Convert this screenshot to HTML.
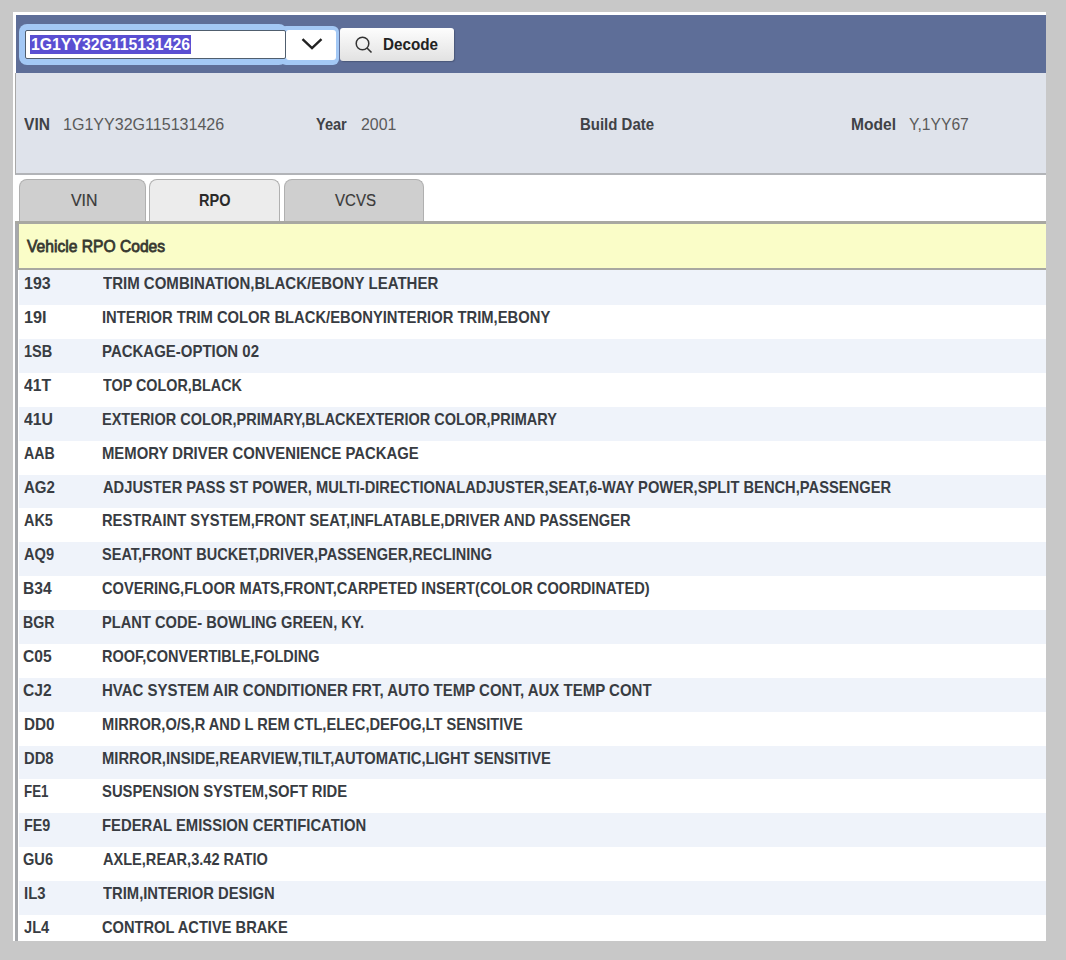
<!DOCTYPE html>
<html><head><meta charset="utf-8">
<style>
html,body{margin:0;padding:0;}
body{width:1066px;height:960px;background:#c8c8c8;position:relative;overflow:hidden;font-family:"Liberation Sans",sans-serif;color:#222;}
.a{position:absolute;}
.t{position:absolute;white-space:nowrap;line-height:20px;transform-origin:0 0;}
#frame{left:13px;top:12px;width:1033px;height:929px;background:#fff;}
#hdr{left:16px;top:15px;width:1030px;height:58px;background:#5e6e98;}
#ring{left:19px;top:24px;width:268px;height:41px;background:#a3c8f5;border-radius:8px;}
#ring2{left:280px;top:25.5px;width:58.5px;height:39px;background:#a3c8f5;border-radius:6px;}
#inp{left:25px;top:30px;width:259px;height:27px;background:#fff;border:1px solid #505e6e;border-radius:2px;}
#selbox{left:30px;top:35px;width:161px;height:19px;background:#5a4fd2;}
#dd{left:286px;top:30px;width:50px;height:30px;background:#fff;border-radius:3px;}
#btn{left:340px;top:28px;width:114px;height:33px;border-radius:3px;background:linear-gradient(#fdfdfd,#e2e2e2);box-shadow:1px 1px 1px rgba(40,50,70,0.35);}
#info{left:15px;top:73px;width:1030px;height:100px;background:#dfe3eb;border-bottom:2px solid #b2b4b8;border-left:1px solid #a8a8a8;}
.tab{position:absolute;top:179px;height:42px;background:#cfcfcf;border:1px solid #b0b0b0;border-bottom:none;border-radius:8px 8px 0 0;box-sizing:border-box;}
.tab.act{background:#ececec;}
#strip{left:15px;top:221px;width:1031px;height:3px;background:#a8a8a2;}
#cont{left:15px;top:224px;width:1031px;height:717px;background:#fff;border-left:3px solid #a6a8ac;box-sizing:border-box;}
#yh{left:18px;top:224px;width:1027px;height:44px;background:#fafdc8;border-bottom:2px solid #a8a8a0;border-left:1px solid #a8a89e;}
.row{position:absolute;left:19px;width:1027px;}
.row.o{background:#eff3fa;}
.rt{position:absolute;white-space:nowrap;line-height:20px;transform-origin:0 0;font-size:16.5px;font-weight:bold;color:#383c42;}
</style></head>
<body>
<div style="position:absolute;left:0;top:0;width:1066px;height:960px;">
<div id="frame" class="a"></div>
<div id="hdr" class="a"></div>
<div id="ring" class="a"></div>
<div id="ring2" class="a"></div>
<div id="inp" class="a"></div>
<div id="selbox" class="a"></div>
<div id="dd" class="a"><svg width="50" height="30" style="position:absolute;left:0;top:0"><polyline points="16.5,9.2 26,18.2 35.5,9.2" fill="none" stroke="#222" stroke-width="2.4"/></svg></div>
<div id="btn" class="a"><svg width="30" height="30" style="position:absolute;left:12px;top:6px"><circle cx="10.5" cy="9.5" r="6.3" fill="none" stroke="#333" stroke-width="1.5"/><line x1="15" y1="14" x2="19.5" y2="18.5" stroke="#333" stroke-width="1.6"/></svg></div>
<div id="info" class="a"></div>
<div class="tab" style="left:19px;width:127px"></div>
<div class="tab act" style="left:149px;width:131px"></div>
<div class="tab" style="left:284px;width:140px"></div>
<div id="strip" class="a"></div>
<div id="cont" class="a"></div>
<div id="yh" class="a"></div>
<div class="t" style="left:31.14px;top:34.20px;font-size:16.5px;font-weight:bold;color:#fff;transform:scaleX(0.9576);">1G1YY32G115131426</div>
<div class="t" style="left:382.65px;top:35.30px;font-size:16px;font-weight:bold;color:#222;transform:scaleX(0.9509);">Decode</div>
<div class="t" style="left:23.50px;top:113.80px;font-size:16.5px;font-weight:bold;color:#404246;transform:scaleX(0.9444);">VIN</div>
<div class="t" style="left:63.03px;top:113.80px;font-size:16.5px;font-weight:normal;color:#5a5a5a;transform:scaleX(0.9726);">1G1YY32G115131426</div>
<div class="t" style="left:315.80px;top:113.80px;font-size:16.5px;font-weight:bold;color:#404246;transform:scaleX(0.8829);">Year</div>
<div class="t" style="left:361.04px;top:113.80px;font-size:16.5px;font-weight:normal;color:#5a5a5a;transform:scaleX(0.9629);">2001</div>
<div class="t" style="left:580.39px;top:113.80px;font-size:16.5px;font-weight:bold;color:#404246;transform:scaleX(0.9075);">Build Date</div>
<div class="t" style="left:850.86px;top:113.80px;font-size:16.5px;font-weight:bold;color:#404246;transform:scaleX(0.9435);">Model</div>
<div class="t" style="left:908.65px;top:113.80px;font-size:16.5px;font-weight:normal;color:#5a5a5a;transform:scaleX(0.9492);">Y,1YY67</div>
<div class="t" style="left:70.50px;top:190.00px;font-size:16.5px;font-weight:normal;color:#3a3a3a;transform:scaleX(0.9615);-webkit-text-stroke:0.2px #3a3a3a;">VIN</div>
<div class="t" style="left:199.02px;top:190.00px;font-size:16.5px;font-weight:bold;color:#2a2a2a;transform:scaleX(0.8794);">RPO</div>
<div class="t" style="left:334.50px;top:189.60px;font-size:16.5px;font-weight:normal;color:#3a3a3a;transform:scaleX(0.9114);-webkit-text-stroke:0.2px #3a3a3a;">VCVS</div>
<div class="t" style="left:26.70px;top:236.30px;font-size:16.5px;font-weight:normal;color:#333;transform:scaleX(0.9469);-webkit-text-stroke:0.8px #383a30;">Vehicle RPO Codes</div>
<div class="row o" style="top:270px;height:35px"></div>
<div class="rt" style="left:23.73px;top:273.28px;transform:scaleX(0.9692307692307692)">193</div>
<div class="rt" style="left:103.30px;top:273.28px;transform:scaleX(0.9098)">TRIM COMBINATION,BLACK/EBONY LEATHER</div>
<div class="row" style="top:305px;height:34px"></div>
<div class="rt" style="left:23.71px;top:307.15px;transform:scaleX(0.9857142857142857)">19I</div>
<div class="rt" style="left:102.40px;top:307.15px;transform:scaleX(0.8956)">INTERIOR TRIM COLOR BLACK/EBONYINTERIOR TRIM,EBONY</div>
<div class="row o" style="top:339px;height:34px"></div>
<div class="rt" style="left:23.82px;top:341.03px;transform:scaleX(0.8806451612903226)">1SB</div>
<div class="rt" style="left:102.39px;top:341.03px;transform:scaleX(0.9076)">PACKAGE-OPTION 02</div>
<div class="row" style="top:373px;height:34px"></div>
<div class="rt" style="left:24.20px;top:374.90px;transform:scaleX(0.95)">41T</div>
<div class="rt" style="left:103.30px;top:374.90px;transform:scaleX(0.8694)">TOP COLOR,BLACK</div>
<div class="row o" style="top:407px;height:34px"></div>
<div class="rt" style="left:24.20px;top:408.77px;transform:scaleX(0.9586206896551724)">41U</div>
<div class="rt" style="left:102.42px;top:408.77px;transform:scaleX(0.8789)">EXTERIOR COLOR,PRIMARY,BLACKEXTERIOR COLOR,PRIMARY</div>
<div class="row" style="top:441px;height:34px"></div>
<div class="rt" style="left:24.20px;top:442.64px;transform:scaleX(0.86)">AAB</div>
<div class="rt" style="left:102.40px;top:442.64px;transform:scaleX(0.9003)">MEMORY DRIVER CONVENIENCE PACKAGE</div>
<div class="row o" style="top:475px;height:33px"></div>
<div class="rt" style="left:24.20px;top:476.52px;transform:scaleX(0.9121212121212121)">AG2</div>
<div class="rt" style="left:103.30px;top:476.52px;transform:scaleX(0.8911)">ADJUSTER PASS ST POWER, MULTI-DIRECTIONALADJUSTER,SEAT,6-WAY POWER,SPLIT BENCH,PASSENGER</div>
<div class="row" style="top:508px;height:34px"></div>
<div class="rt" style="left:24.20px;top:510.39px;transform:scaleX(0.8757575757575758)">AK5</div>
<div class="rt" style="left:102.41px;top:510.39px;transform:scaleX(0.8914)">RESTRAINT SYSTEM,FRONT SEAT,INFLATABLE,DRIVER AND PASSENGER</div>
<div class="row o" style="top:542px;height:34px"></div>
<div class="rt" style="left:24.20px;top:544.26px;transform:scaleX(0.8852941176470588)">AQ9</div>
<div class="rt" style="left:102.42px;top:544.26px;transform:scaleX(0.8805)">SEAT,FRONT BUCKET,DRIVER,PASSENGER,RECLINING</div>
<div class="row" style="top:576px;height:34px"></div>
<div class="rt" style="left:23.26px;top:578.14px;transform:scaleX(0.9448275862068967)">B34</div>
<div class="rt" style="left:102.41px;top:578.14px;transform:scaleX(0.8872)">COVERING,FLOOR MATS,FRONT,CARPETED INSERT(COLOR COORDINATED)</div>
<div class="row o" style="top:610px;height:34px"></div>
<div class="rt" style="left:23.34px;top:612.01px;transform:scaleX(0.86)">BGR</div>
<div class="rt" style="left:102.41px;top:612.01px;transform:scaleX(0.8881)">PLANT CODE- BOWLING GREEN, KY.</div>
<div class="row" style="top:644px;height:34px"></div>
<div class="rt" style="left:23.26px;top:645.88px;transform:scaleX(0.9448275862068967)">C05</div>
<div class="rt" style="left:102.42px;top:645.88px;transform:scaleX(0.8793)">ROOF,CONVERTIBLE,FOLDING</div>
<div class="row o" style="top:678px;height:34px"></div>
<div class="rt" style="left:23.26px;top:679.76px;transform:scaleX(0.9448275862068967)">CJ2</div>
<div class="rt" style="left:102.39px;top:679.76px;transform:scaleX(0.9088)">HVAC SYSTEM AIR CONDITIONER FRT, AUTO TEMP CONT, AUX TEMP CONT</div>
<div class="row" style="top:712px;height:34px"></div>
<div class="rt" style="left:23.77px;top:713.63px;transform:scaleX(0.9258064516129032)">DD0</div>
<div class="rt" style="left:102.41px;top:713.63px;transform:scaleX(0.8869)">MIRROR,O/S,R AND L REM CTL,ELEC,DEFOG,LT SENSITIVE</div>
<div class="row o" style="top:746px;height:33px"></div>
<div class="rt" style="left:23.80px;top:747.50px;transform:scaleX(0.896875)">DD8</div>
<div class="rt" style="left:102.41px;top:747.50px;transform:scaleX(0.8942)">MIRROR,INSIDE,REARVIEW,TILT,AUTOMATIC,LIGHT SENSITIVE</div>
<div class="row" style="top:779px;height:34px"></div>
<div class="rt" style="left:23.89px;top:781.38px;transform:scaleX(0.806896551724138)">FE1</div>
<div class="rt" style="left:102.40px;top:781.38px;transform:scaleX(0.8974)">SUSPENSION SYSTEM,SOFT RIDE</div>
<div class="row o" style="top:813px;height:34px"></div>
<div class="rt" style="left:23.83px;top:815.25px;transform:scaleX(0.8689655172413793)">FE9</div>
<div class="rt" style="left:102.40px;top:815.25px;transform:scaleX(0.8997)">FEDERAL EMISSION CERTIFICATION</div>
<div class="row" style="top:847px;height:34px"></div>
<div class="rt" style="left:23.32px;top:849.12px;transform:scaleX(0.8848484848484848)">GU6</div>
<div class="rt" style="left:103.30px;top:849.12px;transform:scaleX(0.8823)">AXLE,REAR,3.42 RATIO</div>
<div class="row o" style="top:881px;height:34px"></div>
<div class="rt" style="left:23.80px;top:882.99px;transform:scaleX(0.9)">IL3</div>
<div class="rt" style="left:103.30px;top:882.99px;transform:scaleX(0.8963)">TRIM,INTERIOR DESIGN</div>
<div class="row" style="top:915px;height:26px"></div>
<div class="rt" style="left:24.20px;top:916.87px;transform:scaleX(0.8862068965517241)">JL4</div>
<div class="rt" style="left:102.41px;top:916.87px;transform:scaleX(0.8885)">CONTROL ACTIVE BRAKE</div>
</div>
</body></html>
